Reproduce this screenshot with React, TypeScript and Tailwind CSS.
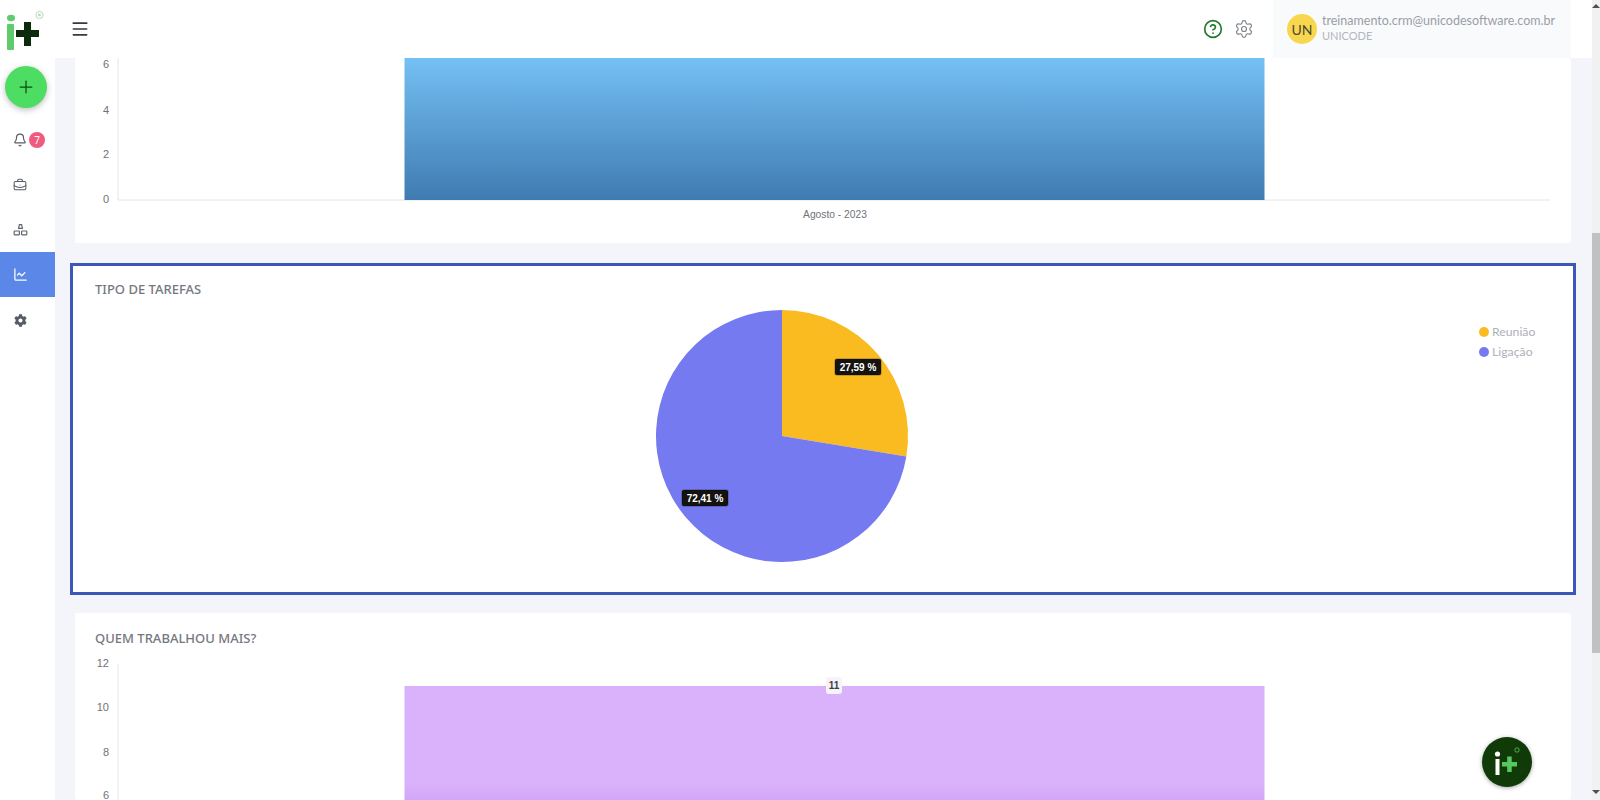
import React from 'react';
import { Bell, BriefcaseBusiness, ChartLine, CircleHelp, Menu, Plus, Settings } from 'lucide-react';
import { FaCog } from 'react-icons/fa';

const chartFont = '"Liberation Sans", Arial, sans-serif';

const polar = (cx: number, cy: number, r: number, pct: number) => {
  const a = (pct / 100) * Math.PI * 2 - Math.PI / 2;
  return [cx + r * Math.cos(a), cy + r * Math.sin(a)];
};

const OrgIcon = () => (
  <svg width="15" height="15" viewBox="0 0 15 15" fill="none" stroke="#5f6670" strokeWidth="1.2">
    <path d="M5.6 6.4L6.4 2.6h2.2l.8 3.8z" />
    <rect x="1.2" y="9" width="5.2" height="3.8" rx="0.5" />
    <rect x="8.6" y="9" width="5.2" height="3.8" rx="0.5" />
  </svg>
);

const Logo = () => (
  <svg width="45" height="58" viewBox="0 0 45 58">
    <ellipse cx="11" cy="18" rx="4" ry="3.2" fill="#5fcb6c" />
    <rect x="7" y="24" width="7" height="26" rx="1" fill="#5fcb6c" />
    <rect x="16" y="30" width="23" height="7" fill="#0c2b0c" />
    <rect x="24" y="22" width="7" height="24" fill="#0c2b0c" />
    <circle cx="39.5" cy="15" r="3.6" fill="none" stroke="#b4dcb9" strokeWidth="1" />
    <circle cx="39.5" cy="15" r="1.4" fill="#b4dcb9" />
  </svg>
);

const Sidebar = () => (
  <aside className="w-[55px] shrink-0 bg-white flex flex-col">
    <div className="h-[58px]">
      <Logo />
    </div>
    <button className="ml-[5px] mt-[8px] mb-[9px] w-[42px] h-[42px] rounded-full bg-[#4cdd62] shadow-[0_2px_6px_rgba(0,0,0,0.25)] flex items-center justify-center">
      <Plus size={20} strokeWidth={1.5} color="#0f4a14" />
    </button>
    <div className="h-[45px] pl-[13px] flex items-center gap-[2px]">
      <Bell size={14} strokeWidth={2} color="#555c66" />
      <span className="w-[16px] h-[16px] rounded-full bg-[#ef5a7e] text-white text-[10px] leading-[16px] text-center font-['Noto_Sans',sans-serif]">
        7
      </span>
    </div>
    <div className="h-[45px] pl-[13px] flex items-center">
      <BriefcaseBusiness size={14} strokeWidth={1.8} color="#555c66" />
    </div>
    <div className="h-[45px] pl-[13px] flex items-center">
      <OrgIcon />
    </div>
    <div className="h-[45px] pl-[13px] flex items-center bg-[#5b87e8]">
      <ChartLine size={15} strokeWidth={2} color="#ffffff" />
    </div>
    <div className="h-[46px] pl-[14px] flex items-center">
      <FaCog size={13} color="#555c66" />
    </div>
  </aside>
);

const Header = () => (
  <header className="h-[58px] shrink-0 bg-white flex items-center pl-[15px] pr-[21px]">
    <Menu size={20} strokeWidth={2} color="#333a42" />
    <div className="ml-auto flex items-center gap-[11px] mr-[19px]">
      <CircleHelp size={20} strokeWidth={2} color="#23792f" />
      <Settings size={20} strokeWidth={1.4} color="#7d838b" />
    </div>
    <div className="w-[298px] h-full bg-[#f9fafc] flex items-center pl-[14px] gap-[5px]">
      <div className="w-[30px] h-[30px] shrink-0 rounded-full bg-[#f8d64e] text-[#4d4a36] text-[14px] flex items-center justify-center font-['Lato',sans-serif]">
        UN
      </div>
      <div className="flex flex-col pb-[3px] font-['Lato',sans-serif] whitespace-nowrap">
        <span className="text-[12.5px] leading-[16px] text-[#9a9ea6]">treinamento.crm@unicodesoftware.com.br</span>
        <span className="text-[11px] leading-[14px] text-[#b3b6bc]">UNICODE</span>
      </div>
    </div>
  </header>
);

const TasksChart = () => (
  <div className="h-[185px] shrink-0 bg-white rounded-[3px] overflow-hidden">
    <svg width="1496" height="185" viewBox="75 58 1496 185">
      <defs>
        <linearGradient id="blueBar" x1="0" y1="0" x2="0" y2="1">
          <stop offset="0" stopColor="#74c0f4" />
          <stop offset="1" stopColor="#3f7bb1" />
        </linearGradient>
      </defs>
      <path d="M118 58V200H1550" fill="none" stroke="#e4e6ea" strokeWidth="1" />
      <rect x="404.5" y="58" width="860" height="142" fill="url(#blueBar)" />
      <g fontFamily={chartFont} fontSize="11" fill="#6f7277" textAnchor="end">
        <text x="109" y="68">6</text>
        <text x="109" y="114">4</text>
        <text x="109" y="158">2</text>
        <text x="109" y="203">0</text>
      </g>
      <text x="835" y="218" fontFamily={chartFont} fontSize="10.25" fill="#6f7277" textAnchor="middle">
        Agosto - 2023
      </text>
    </svg>
  </div>
);

const PieLabel = ({ x, y, text }: { x: number; y: number; text: string }) => (
  <g>
    <rect x={x - 23} y={y - 8} width="46" height="16" rx="2" fill="#14130f" stroke="#000000" strokeOpacity="0.25" strokeWidth="1.5" />
    <text x={x} y={y + 3.5} fontFamily={chartFont} fontSize="10" fontWeight="700" fill="#ffffff" textAnchor="middle">
      {text}
    </text>
  </g>
);

const TaskTypes = () => {
  const cx = 782;
  const cy = 436;
  const r = 126;
  const [ex, ey] = polar(cx, cy, r, 27.59);
  return (
    <section className="h-[332px] shrink-0 -mx-[5px] mt-[20px] mb-[18px] bg-white border-[3px] border-[#3b58b8] flex flex-col">
      <h2 className="h-[44px] pt-[13px] pl-[22px] text-[13px] leading-[20px] font-medium text-[#74787f] font-['Noto_Sans',sans-serif]">
        TIPO DE TAREFAS
      </h2>
      <div className="flex">
        <svg width="1390" height="270" viewBox="73 310 1390 270">
          <path d={`M${cx} ${cy}L${cx} ${cy - r}A${r} ${r} 0 0 1 ${ex} ${ey}Z`} fill="#f9bb1f" />
          <path d={`M${cx} ${cy}L${ex} ${ey}A${r} ${r} 0 1 1 ${cx} ${cy - r}Z`} fill="#767af0" />
          <PieLabel x={858} y={367} text="27,59 %" />
          <PieLabel x={705} y={498} text="72,41 %" />
        </svg>
        <ul className="ml-[16px] mt-[12px] font-['Lato',sans-serif] text-[12.25px] leading-[20px] text-[#aeb1b8]">
          <li className="flex items-center gap-[3px]">
            <span className="w-[10px] h-[10px] rounded-full bg-[#f9bb1f]" />
            Reunião
          </li>
          <li className="flex items-center gap-[3px]">
            <span className="w-[10px] h-[10px] rounded-full bg-[#767af0]" />
            Ligação
          </li>
        </ul>
      </div>
    </section>
  );
};

const WhoWorked = () => (
  <section className="flex-1 bg-white rounded-[3px] flex flex-col overflow-hidden">
    <h2 className="h-[42px] shrink-0 pt-[15px] pl-[20px] text-[13px] leading-[20px] font-medium text-[#74787f] font-['Noto_Sans',sans-serif]">
      QUEM TRABALHOU MAIS?
    </h2>
    <svg width="1496" height="145" viewBox="75 655 1496 145" className="shrink-0">
      <defs>
        <linearGradient id="purpleBar" x1="0" y1="0" x2="0" y2="1">
          <stop offset="0" stopColor="#dab2fc" />
          <stop offset="0.85" stopColor="#dab2fc" />
          <stop offset="1" stopColor="#d3a6f7" />
        </linearGradient>
      </defs>
      <path d="M118 664V800" fill="none" stroke="#e4e6ea" strokeWidth="1" />
      <rect x="404.5" y="686" width="860" height="114" fill="url(#purpleBar)" />
      <rect x="826" y="677" width="16" height="17" rx="3" fill="#f6f4f8" />
      <text x="834" y="689" fontFamily={chartFont} fontSize="10" fontWeight="700" fill="#3d3d42" textAnchor="middle">
        11
      </text>
      <g fontFamily={chartFont} fontSize="11" fill="#6f7277" textAnchor="end">
        <text x="109" y="667">12</text>
        <text x="109" y="711">10</text>
        <text x="109" y="756">8</text>
        <text x="109" y="799">6</text>
      </g>
    </svg>
  </section>
);

const Scrollbar = () => (
  <div className="w-[8px] shrink-0 bg-[#f1f1f1] flex flex-col items-center">
    <div className="mt-[4px] w-0 h-0 border-x-[4px] border-x-transparent border-b-[4px] border-b-[#505050]" />
    <div className="mt-[225px] h-[420px] w-full bg-[#c1c1c1]" />
    <div className="mt-auto mb-[6px] w-0 h-0 border-x-[4px] border-x-transparent border-t-[4px] border-t-[#505050]" />
  </div>
);

const HelpBubble = () => (
  <button className="absolute right-[68px] bottom-[13px] w-[50px] h-[50px] rounded-full bg-[#103a07] shadow-[0_1px_4px_rgba(0,0,0,0.35)] flex items-center justify-center">
    <svg width="50" height="50" viewBox="0 0 50 50">
      <circle cx="15.5" cy="17" r="2.6" fill="#ffffff" />
      <rect x="13.5" y="22" width="4" height="16" fill="#ffffff" />
      <rect x="20" y="25" width="15" height="4.5" fill="#56c85f" />
      <rect x="25.2" y="19.5" width="4.5" height="15.5" fill="#56c85f" />
      <circle cx="35" cy="13" r="2.2" fill="none" stroke="#56c85f" strokeWidth="0.8" />
    </svg>
  </button>
);

const App: React.FC = () => {
  return (
    <div className="relative flex h-screen overflow-hidden bg-white">
      <Sidebar />
      <main className="flex-1 min-w-0 flex flex-col">
        <Header />
        <div className="flex-1 min-h-0 bg-[#f3f5fa] pl-[20px] pr-[21px] flex flex-col overflow-hidden">
          <TasksChart />
          <TaskTypes />
          <WhoWorked />
        </div>
      </main>
      <Scrollbar />
      <HelpBubble />
    </div>
  );
};

export default App;
